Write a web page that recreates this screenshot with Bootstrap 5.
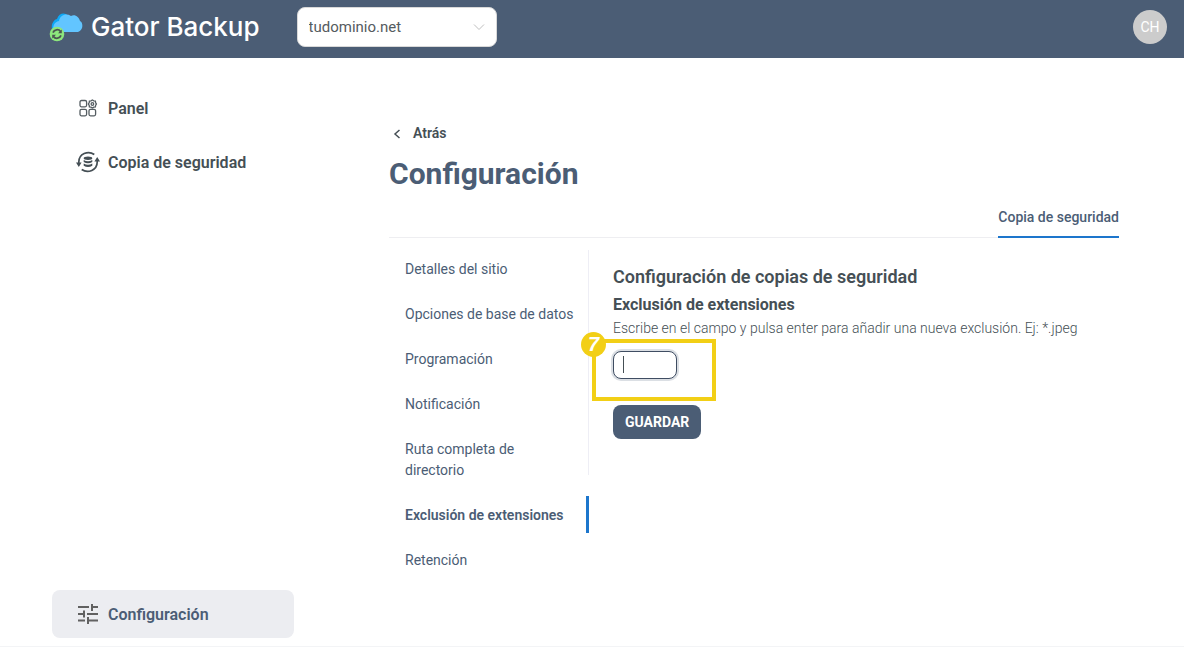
<!DOCTYPE html>
<html lang="es">
<head>
<meta charset="utf-8">
<meta name="viewport" content="width=device-width, initial-scale=1">
<title>Gator Backup - Configuración</title>
<link href="https://cdn.jsdelivr.net/npm/bootstrap@5.3.0/dist/css/bootstrap.min.css" rel="stylesheet">
<style>
  body { font-family: Roboto, "Liberation Sans", sans-serif; font-size: 14px; line-height: 21px; color: #454f55; background: #fff; }
  a { color: inherit; text-decoration: none; }
  .topbar { background: #4b5d75; height: 58px; padding: 0 17px 4px 49px; }
  .brand-name { font-family: Inter, Roboto, sans-serif; font-size: 26px; line-height: 32px; font-weight: 500; color: #fff; }
  .domain-pick { width: 200px; height: 40px; margin-left: 37px; padding: 0 36px 0 11px; border: 1px solid #d9d9d9; border-radius: 8px; font-size: 15px; color: #555b60; background-size: 12px 12px; background-position: right 11px center;
    background-image: url("data:image/svg+xml,%3Csvg xmlns='http://www.w3.org/2000/svg' viewBox='0 0 12 12' fill='none' stroke='%23bfbfbf'%3E%3Cpath d='M1 3.5l5 5 5-5'/%3E%3C/svg%3E"); }
  .avatar { width: 34px; height: 34px; background: #ccc; color: #fff; font-size: 14px; }
  .shell { min-height: calc(100vh - 58px); border-bottom: 1px solid #f3f4f6; }
  .sidebar { width: 294px; padding: 26px 0 8px 52px; gap: 6px; }
  .side-link { height: 48px; padding-left: 24px; gap: 8px; border-radius: 8px; font-size: 16px; font-weight: 600; }
  .side-link svg { width: 24px; height: 24px; flex: none; }
  .side-link.current { background: #ecedf1; color: #4b5d75; }
  .main-area { padding: 65px 65px 24px 95px; }
  .back-link { font-weight: 600; gap: 12px; padding-left: 4px; }
  .page-title { font-size: 30px; line-height: 40px; font-weight: 700; color: #4b5d75; margin: 9px 0 12px; }
  .tab-line { border-bottom: 1px solid #eeeef1; height: 32px; }
  .tab-line a { border-bottom: 2px solid #1d76cc; height: 32px; padding-top: 1px; font-weight: 500; color: #4b5d75; }
  .settings { padding-top: 12px; }
  .subnav { width: 200px; gap: 8px; position: relative; z-index: 1; }
  .subnav a { padding: 9px 12px 7px 16px; color: #4b5d75; border-right: 3px solid transparent; }
  .subnav a.current { border-color: #1d76cc; font-weight: 600; }
  .panel { margin-left: -1px; border-left: 1px solid #eeeef5; padding: 14px 0 36px 24px; }
  .panel h2 { font-size: 18px; line-height: 26px; font-weight: 600; margin-bottom: 4px; }
  .ext-label { font-size: 16px; line-height: 22px; font-weight: 700; }
  .hint { font-size: 14px; line-height: 20px; margin: 2px 0 13px; font-weight: 300; }
  .ext-input { width: 64px; height: 28px; border: 1px solid #3f4d62; border-radius: 8px; padding: 0 9px; box-shadow: 0 0 0 2px #dbdfe4; background: linear-gradient(#454f55, #454f55) 9px center / 1px 17px no-repeat #fff; }
  .callout-frame { left: -21px; top: -12px; width: 124px; height: 62px; border: 4px solid #f2cf16; pointer-events: none; }
  .callout-num { left: -32px; top: -19px; width: 25px; height: 25px; background: #f2cf16; color: #fff; font: italic bold 20px/25px "Liberation Sans", sans-serif; }
  .save-btn { height: 34px; padding: 1px 12px 0; margin-top: 26px; border-radius: 8px; background: #4b5d75; color: #fff; font-size: 14px; font-weight: 700; }
</style>
</head>
<body>
<header class="topbar d-flex align-items-center">
  <a href="#" class="d-flex align-items-center">
    <svg width="42" height="34" viewBox="0 0 42 34" aria-hidden="true">
      <path d="M4 21C1 16 4 10 8 9c2-6 8-7 11-3l5 14z" fill="#0ea8f5"/>
      <path d="M5 22C3 17 5 12 10 11c1-6 7-8 12-5 4-2 8 1 9 5 3 1 4 9-2 11z" fill="#62c5ff"/>
      <circle cx="8" cy="24" r="7.3" fill="#8de77d"/>
      <g fill="none" stroke="#4b5551" stroke-width="1.8"><path d="M4 22.600A4.300 4.300 0 0 1 11.600 21.600M12 25.400A4.300 4.300 0 0 1 4.400 26.400"/></g>
      <path d="M12.800 19.500v3.800H9zM3.200 28.500v-3.800H7z" fill="#4b5551"/>
    </svg>
    <span class="brand-name">Gator Backup</span>
  </a>
  <select class="form-select domain-pick" aria-label="Dominio"><option>tudominio.net</option></select>
  <button type="button" class="avatar btn rounded-circle p-0 border-0 ms-auto">CH</button>
</header>

<div class="shell d-flex">
  <nav class="sidebar d-flex flex-column flex-shrink-0" aria-label="Principal">
    <a href="#" class="side-link d-flex align-items-center">
      <svg viewBox="0 0 24 24" fill="none" stroke="#555d62" stroke-width="1.3" aria-hidden="true">
        <rect x="4" y="4.500" width="6.600" height="6.300" rx="1.500"/><rect x="4" y="13.300" width="6.600" height="6.500" rx="1.500"/><rect x="13" y="13.300" width="6.600" height="6.500" rx="1.500"/>
        <path d="M16.400 4l1.400.9 1.600.2.200 1.600.8 1.300-.8 1.300-.2 1.600-1.600.2-1.400.9-1.400-.9-1.600-.2-.2-1.600-.8-1.300.8-1.300.2-1.600 1.600-.2z"/><circle cx="16.400" cy="8" r="1.300"/>
      </svg>
      Panel
    </a>
    <a href="#" class="side-link d-flex align-items-center">
      <svg viewBox="0 0 24 24" fill="none" stroke="#454f55" stroke-width="1.700" aria-hidden="true">
        <path d="M2.800 14V12C2.800 4 12 0 18.300 4.500M21.200 9.500V12c0 8-9.200 12-15.500 7.500"/>
        <path d="M0 12.500h5.600L2.800 17zM18.400 11.500H24L21.200 7z" fill="#454f55" stroke="none"/>
        <g fill="#454f55" stroke="none"><ellipse cx="12" cy="8.300" rx="4.300" ry="1.700"/><path d="M7.700 10q4.300 2.400 8.600 0v2q-4.300 2.600-8.600 0zM7.700 13.600q4.300 2.400 8.600 0v2.200q-4.300 2.600-8.600 0z"/></g>
      </svg>
      Copia de seguridad
    </a>
    <a href="#" class="side-link current d-flex align-items-center mt-auto" aria-current="page">
      <svg viewBox="0 0 24 24" fill="none" stroke="#616161" stroke-width="2" aria-hidden="true">
        <path d="M2 5h11M16 5h6M16 2v7M2 12h6M8 8.500v7M11 12h11M2 18.500h7M12 15v7M12 18.500h10"/>
      </svg>
      Configuración
    </a>
  </nav>

  <main class="main-area flex-grow-1">
    <a href="#" class="back-link d-inline-flex align-items-center">
      <svg width="8" height="10" viewBox="0 0 8 10" fill="none" stroke="#454f55" stroke-width="1.500" aria-hidden="true"><path d="M6.500 1L2 5l4.500 4"/></svg>
      Atrás
    </a>
    <h1 class="page-title">Configuración</h1>
    <div class="tab-line d-flex justify-content-end"><a href="#">Copia de seguridad</a></div>

    <div class="settings d-flex align-items-start">
      <nav class="subnav d-flex flex-column flex-shrink-0" aria-label="Configuración">
        <a href="#">Detalles del sitio</a>
        <a href="#">Opciones de base de datos</a>
        <a href="#">Programación</a>
        <a href="#">Notificación</a>
        <a href="#">Ruta completa de directorio</a>
        <a href="#" class="current">Exclusión de extensiones</a>
        <a href="#">Retención</a>
      </nav>
      <form class="panel flex-grow-1">
        <h2>Configuración de copias de seguridad</h2>
        <label for="ext" class="ext-label d-block">Exclusión de extensiones</label>
        <p class="hint">Escribe en el campo y pulsa enter para añadir una nueva exclusión. Ej: *.jpeg</p>
        <div class="position-relative">
          <input id="ext" type="text" class="ext-input d-block">
          <span class="callout-frame position-absolute"></span>
          <span class="callout-num position-absolute rounded-circle text-center">7</span>
        </div>
        <button type="button" class="save-btn btn border-0">GUARDAR</button>
      </form>
    </div>
  </main>
</div>
<script src="https://cdn.jsdelivr.net/npm/bootstrap@5.3.0/dist/js/bootstrap.bundle.min.js"></script>
</body>
</html>
